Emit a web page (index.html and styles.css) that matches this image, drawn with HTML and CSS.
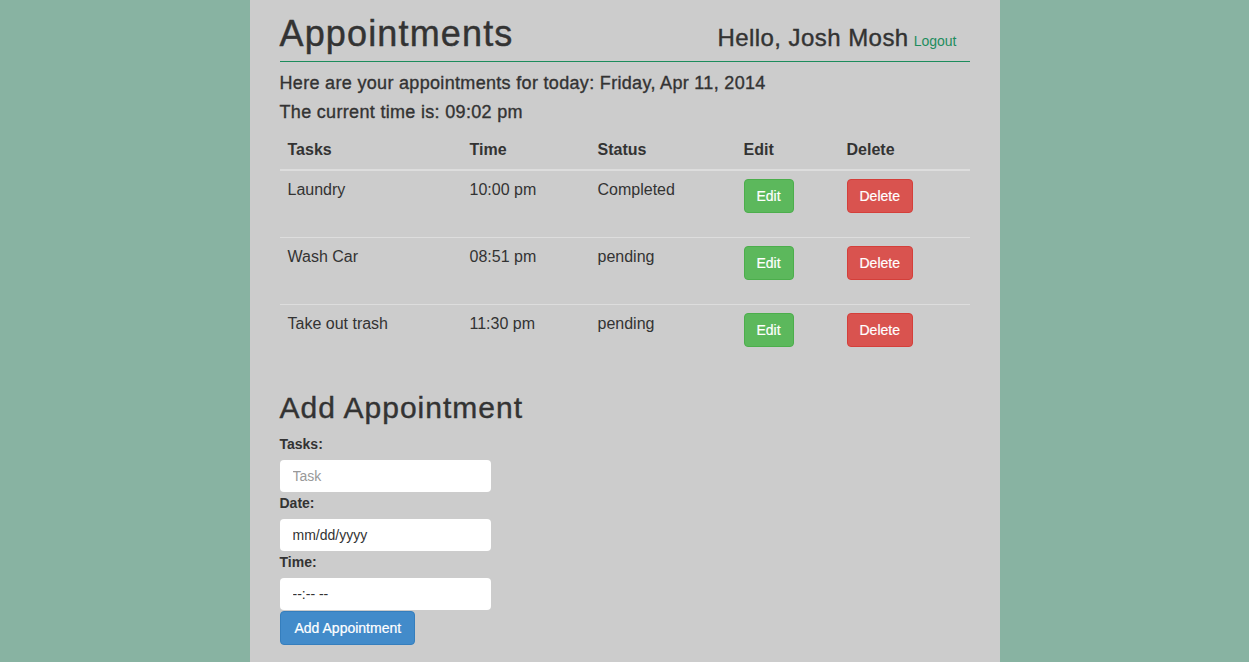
FILE: index.html
```html
<!DOCTYPE html>
<html lang="en">
<head>
<meta charset="utf-8">
<title>Appointments</title>
<link rel="stylesheet" href="styles.css">
</head>
<body>
<div class="page">
  <header class="topbar">
    <h1 class="title">Appointments</h1>
    <div class="user">
      <h3 class="hello">Hello, Josh Mosh</h3>
      <a class="logout" href="#">Logout</a>
    </div>
  </header>

  <div class="intro">
    <p>Here are your appointments for today: Friday, Apr 11, 2014</p>
    <p>The current time is: 09:02 pm</p>
  </div>

  <table class="appts">
    <thead>
      <tr>
        <th class="c-task">Tasks</th>
        <th class="c-time">Time</th>
        <th class="c-status">Status</th>
        <th class="c-edit">Edit</th>
        <th class="c-delete">Delete</th>
      </tr>
    </thead>
    <tbody>
      <tr>
        <td>Laundry</td>
        <td>10:00 pm</td>
        <td>Completed</td>
        <td><form class="row-action"><button type="button" class="btn btn-edit">Edit</button></form></td>
        <td><form class="row-action"><button type="button" class="btn btn-delete">Delete</button></form></td>
      </tr>
      <tr>
        <td>Wash Car</td>
        <td>08:51 pm</td>
        <td>pending</td>
        <td><form class="row-action"><button type="button" class="btn btn-edit">Edit</button></form></td>
        <td><form class="row-action"><button type="button" class="btn btn-delete">Delete</button></form></td>
      </tr>
      <tr>
        <td>Take out trash</td>
        <td>11:30 pm</td>
        <td>pending</td>
        <td><form class="row-action"><button type="button" class="btn btn-edit">Edit</button></form></td>
        <td><form class="row-action"><button type="button" class="btn btn-delete">Delete</button></form></td>
      </tr>
    </tbody>
  </table>

  <h2 class="subtitle">Add Appointment</h2>
  <form class="add-form">
    <label class="field-label" for="task">Tasks:</label>
    <input class="field" id="task" type="text" placeholder="Task">
    <label class="field-label" for="date">Date:</label>
    <input class="field field-format" id="date" type="text" placeholder="mm/dd/yyyy">
    <label class="field-label" for="time">Time:</label>
    <input class="field field-format" id="time" type="text" placeholder="--:-- --">
    <button type="button" class="btn btn-primary btn-add">Add Appointment</button>
  </form>
</div>
</body>
</html>
```

FILE: styles.css
```css
* {
  box-sizing: border-box;
}

html, body {
  margin: 0;
  padding: 0;
}

body {
  background: #88b3a2;
  font-family: "Liberation Sans", Arial, sans-serif;
  font-size: 14px;
  line-height: 1.428571;
  color: #333;
}

.page {
  width: 750px;
  min-height: 100vh;
  margin: 0 auto;
  background: #cccccc;
  padding: 0 30px 20px;
}

/* header */
.topbar {
  display: flex;
  justify-content: space-between;
  align-items: baseline;
  padding: 16px 0 9px;
  border-bottom: 1px solid #1c8c5c;
}

.title {
  margin: 0;
  font-size: 36px;
  line-height: 36px;
  font-weight: normal;
  letter-spacing: 1.15px;
  color: #333;
  -webkit-text-stroke: 0.45px #333;
}

.user {
  display: flex;
  align-items: baseline;
  gap: 5px;
  margin-right: 13px;
}

.hello {
  margin: 0;
  font-size: 24px;
  line-height: 26px;
  font-weight: normal;
  letter-spacing: 0.45px;
  color: #333;
  -webkit-text-stroke: 0.4px #333;
}

.logout {
  font-size: 14px;
  color: #1e8c5e;
  text-decoration: none;
}

/* intro */
.intro {
  margin: 11px 0 8px;
}

.intro p {
  margin: 0;
  font-size: 18px;
  line-height: 20px;
  letter-spacing: 0.32px;
  color: #333;
  -webkit-text-stroke: 0.35px #333;
}

.intro p + p {
  margin-top: 9px;
}

/* table */
.appts {
  width: 100%;
  border-collapse: collapse;
  border-spacing: 0;
  margin-bottom: 20px;
  font-size: 16px;
  line-height: 1.428571;
}

.appts th {
  text-align: left;
  font-weight: bold;
  padding: 9px 8px 7px;
  vertical-align: bottom;
  border-bottom: 2px solid #dddddd;
}

.appts td {
  padding: 8px 8px 8px;
  vertical-align: top;
  border-top: 1px solid #dddddd;
}

.appts tbody tr:first-child td {
  border-top: 0;
}

.c-task { width: 182px; }
.c-time { width: 128px; }
.c-status { width: 146px; }
.c-edit { width: 103px; }
.c-delete { width: 131px; }

.row-action {
  margin: 0 0 16px;
}

/* buttons */
.btn {
  display: inline-block;
  font-family: "Liberation Sans", Arial, sans-serif;
  font-size: 14px;
  line-height: 20px;
  padding: 6px 12px;
  border: 1px solid transparent;
  border-radius: 4px;
  color: #fff;
  cursor: pointer;
  white-space: nowrap;
  -webkit-text-stroke: 0.2px #fff;
}

.btn-edit {
  background: #5cb85c;
  border-color: #4cae4c;
}

.btn-delete {
  background: #d9534f;
  border-color: #d43f3a;
}

.btn-primary {
  background: #428bca;
  border-color: #357ebd;
}

.btn-add {
  padding: 6px 13px 6px 14px;
}

/* form */
.subtitle {
  margin: 0 0 10px;
  font-size: 30px;
  line-height: 33px;
  font-weight: normal;
  letter-spacing: 1px;
  color: #333;
  -webkit-text-stroke: 0.4px #333;
}

.add-form {
  margin: 0;
}

.field-label {
  display: block;
  height: 20px;
  margin: 0 0 6px;
  font-size: 14px;
  line-height: 20px;
  font-weight: bold;
  color: #333;
}

.field {
  display: block;
  width: 211px;
  height: 32px;
  margin: 0 0 1px;
  padding: 6px 12px 6px 13px;
  font-family: "Liberation Sans", Arial, sans-serif;
  font-size: 14px;
  line-height: 20px;
  color: #555;
  background: #fff;
  border: 0;
  border-radius: 4px;
  outline: none;
}

.field::placeholder {
  color: #999;
}

.field-format::placeholder {
  color: #333;
}
```
